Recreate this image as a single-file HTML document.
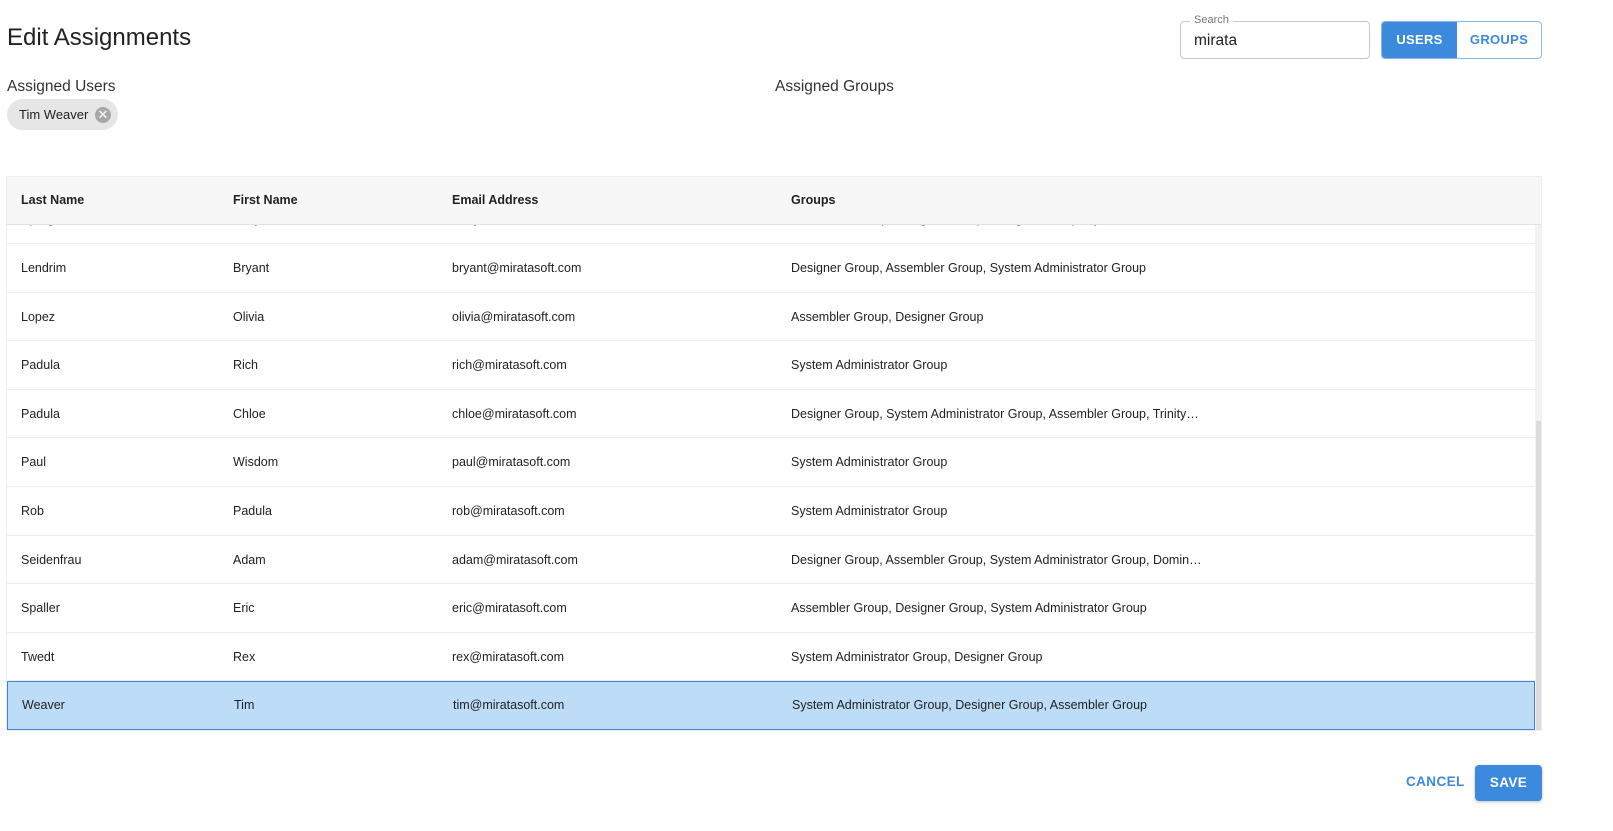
<!DOCTYPE html>
<html><head><meta charset="utf-8"><style>
*{box-sizing:border-box;margin:0;padding:0}
body{width:1613px;height:831px;background:#fff;font-family:"Liberation Sans",Arial,sans-serif;color:#222;position:relative;overflow:hidden}
.abs{position:absolute}
h1{position:absolute;left:7px;top:24px;font-size:24px;font-weight:400;color:#222}
.lbl{font-size:15.5px;color:#333}
.chip{left:7px;top:99px;width:111px;height:31px;border-radius:16px;background:#e6e6e6;font-size:13px;line-height:31px;padding-left:12px;color:#222}
.chip .x{position:absolute;right:7px;top:8px;width:16px;height:16px;border-radius:50%;background:#a8a8a8;color:#fff;font-size:13px;line-height:16px;text-align:center}
.search{left:1180px;top:21px;width:190px;height:38px;border:1px solid #c8c8c8;border-radius:4px}
.search .t{position:absolute;left:9px;top:-8px;background:#fff;padding:0 4px;font-size:11px;color:#777}
.search .v{position:absolute;left:13px;top:10px;font-size:15.5px;color:#222}
.tog{left:1381px;top:21px;width:161px;height:38px;border:1px solid #8ab8e8;border-radius:4px;overflow:hidden;display:flex;font-size:13px;font-weight:700;letter-spacing:.3px}
.tog div{line-height:36px;text-align:center}
.table{left:6px;top:176px;width:1536px;height:555px;border:1px solid #eee;overflow:hidden}
.head{position:absolute;left:0;top:0;width:100%;height:48px;background:#f7f7f7;border-bottom:1px solid #e2e2e2;z-index:2;font-weight:700;font-size:12.5px}
.head span,.row span{position:absolute;top:0}
.body{position:absolute;left:0;top:48px;width:1528px;height:506px;overflow:hidden}
.row{position:absolute;left:0;width:1528px;height:48.6px;border-bottom:1px solid #ebebeb;font-size:12.5px;line-height:48px}
.c1{left:14px}.c2{left:226px}.c3{left:445px}.c4{left:784px}
.sel{background:#bcdcf8;border:1px solid #3d86d9}
.sb{position:absolute;left:1528px;top:48px;width:8px;height:506px;background:#f3f3f3}
.sb div{position:absolute;left:1px;top:196px;width:6px;height:310px;background:#dcdcdc}
.btn{font-size:13.5px;font-weight:700;letter-spacing:.4px}
</style></head><body>
<h1>Edit Assignments</h1>
<div class="abs lbl" style="left:7px;top:78px">Assigned Users</div>
<div class="abs lbl" style="left:775px;top:78px">Assigned Groups</div>
<div class="abs chip">Tim Weaver<div class="x">✕</div></div>
<div class="abs search"><div class="t">Search</div><div class="v">mirata</div></div>
<div class="abs tog"><div style="width:75px;background:#3b8ade;color:#fff">USERS</div><div style="flex:1;color:#3b8ade">GROUPS</div></div>
<div class="abs table">
<div class="head" style="line-height:46px"><span class="c1">Last Name</span><span class="c2">First Name</span><span class="c3">Email Address</span><span class="c4">Groups</span></div>
<div class="body">
<div class="row" style="top:-29.6px"><span class="c1">Sprague</span><span class="c2">Mary</span><span class="c3">mary@miratasoft.com</span><span class="c4">Assembler Group, Designer Group, Designer Group, Sy…</span></div>
<div class="row" style="top:19px"><span class="c1">Lendrim</span><span class="c2">Bryant</span><span class="c3">bryant@miratasoft.com</span><span class="c4">Designer Group, Assembler Group, System Administrator Group</span></div>
<div class="row" style="top:67.6px"><span class="c1">Lopez</span><span class="c2">Olivia</span><span class="c3">olivia@miratasoft.com</span><span class="c4">Assembler Group, Designer Group</span></div>
<div class="row" style="top:116.2px"><span class="c1">Padula</span><span class="c2">Rich</span><span class="c3">rich@miratasoft.com</span><span class="c4">System Administrator Group</span></div>
<div class="row" style="top:164.8px"><span class="c1">Padula</span><span class="c2">Chloe</span><span class="c3">chloe@miratasoft.com</span><span class="c4">Designer Group, System Administrator Group, Assembler Group, Trinity…</span></div>
<div class="row" style="top:213.4px"><span class="c1">Paul</span><span class="c2">Wisdom</span><span class="c3">paul@miratasoft.com</span><span class="c4">System Administrator Group</span></div>
<div class="row" style="top:262px"><span class="c1">Rob</span><span class="c2">Padula</span><span class="c3">rob@miratasoft.com</span><span class="c4">System Administrator Group</span></div>
<div class="row" style="top:310.6px"><span class="c1">Seidenfrau</span><span class="c2">Adam</span><span class="c3">adam@miratasoft.com</span><span class="c4">Designer Group, Assembler Group, System Administrator Group, Domin…</span></div>
<div class="row" style="top:359.2px"><span class="c1">Spaller</span><span class="c2">Eric</span><span class="c3">eric@miratasoft.com</span><span class="c4">Assembler Group, Designer Group, System Administrator Group</span></div>
<div class="row" style="top:407.8px"><span class="c1">Twedt</span><span class="c2">Rex</span><span class="c3">rex@miratasoft.com</span><span class="c4">System Administrator Group, Designer Group</span></div>
<div class="row sel" style="top:456.4px;height:49px;line-height:46px"><span class="c1">Weaver</span><span class="c2">Tim</span><span class="c3">tim@miratasoft.com</span><span class="c4">System Administrator Group, Designer Group, Assembler Group</span></div>
</div>
<div class="sb"><div></div></div>
</div>
<div class="abs btn" style="left:1406px;top:774px;color:#3b8ade">CANCEL</div>
<div class="abs btn" style="left:1475px;top:765px;width:67px;height:36px;background:#3b8ade;color:#fff;border-radius:4px;line-height:36px;text-align:center;box-shadow:0 1px 3px rgba(0,0,0,.25)">SAVE</div>
</body></html>
